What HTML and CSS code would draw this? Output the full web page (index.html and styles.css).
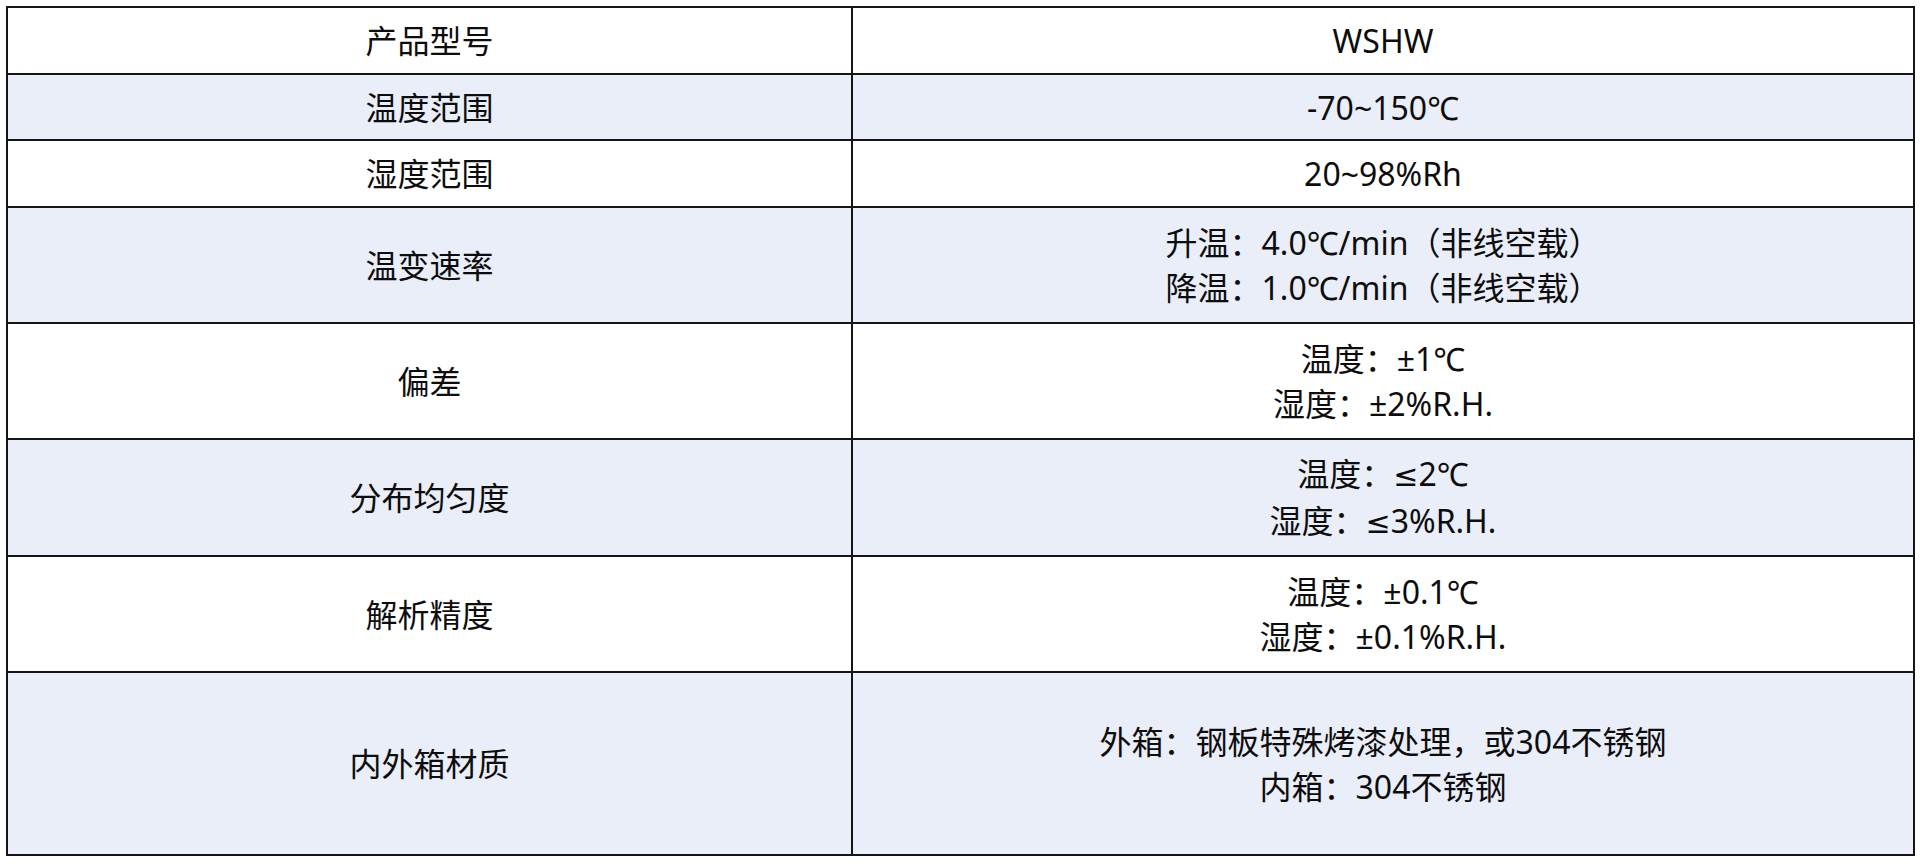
FILE: index.html
```html
<!DOCTYPE html>
<html lang="zh-CN">
<head>
<meta charset="utf-8">
<title>WSHW 参数</title>
<link rel="stylesheet" href="styles.css">
</head>
<body>
<table class="spec">
  <colgroup>
    <col class="col-name">
    <col class="col-value">
  </colgroup>
  <tbody>
    <tr class="r1"><td>产品型号</td><td>WSHW</td></tr>
    <tr class="r2 alt"><td>温度范围</td><td>-70~150℃</td></tr>
    <tr class="r3"><td>湿度范围</td><td>20~98%Rh</td></tr>
    <tr class="r4 alt"><td>温变速率</td><td>升温：4.0℃/min（非线空载）<br>降温：1.0℃/min（非线空载）</td></tr>
    <tr class="r5"><td>偏差</td><td>温度：±1℃<br>湿度：±2%R.H.</td></tr>
    <tr class="r6 alt"><td>分布均匀度</td><td>温度：<span class="sym">≤</span>2℃<br>湿度：<span class="sym">≤</span>3%R.H.</td></tr>
    <tr class="r7"><td>解析精度</td><td>温度：±0.1℃<br>湿度：±0.1%R.H.</td></tr>
    <tr class="r8 alt"><td>内外箱材质</td><td>外箱：钢板特殊烤漆处理，或304不锈钢<br>内箱：304不锈钢</td></tr>
  </tbody>
</table>
</body>
</html>
```
FILE: styles.css
```css
html, body {
  margin: 0;
  padding: 0;
  background: #ffffff;
}

body {
  padding: 6px 0 0 6px;
  font-family: "Noto Sans", "Noto Sans CJK SC", sans-serif;
  color: #0d0d0d;
}

.spec {
  border-collapse: collapse;
  width: 1907px;
  table-layout: fixed;
}

.col-name { width: 845px; }
.col-value { width: 1062px; }

.spec td {
  border: 2px solid #151515;
  text-align: center;
  vertical-align: middle;
  font-size: 32px;
  line-height: 45px;
  padding: 0;
}

.spec tr.alt td {
  background: #eaeef9;
}

.sym {
  font-family: "DejaVu Sans", "Noto Sans", sans-serif;
  font-size: 30px;
}

.r1 { height: 67px; }
.r2 { height: 66px; }
.r3 { height: 67px; }
.r4 { height: 116px; }
.r5 { height: 116px; }
.r6 { height: 117px; }
.r7 { height: 116px; }
.r8 { height: 183px; }
```
